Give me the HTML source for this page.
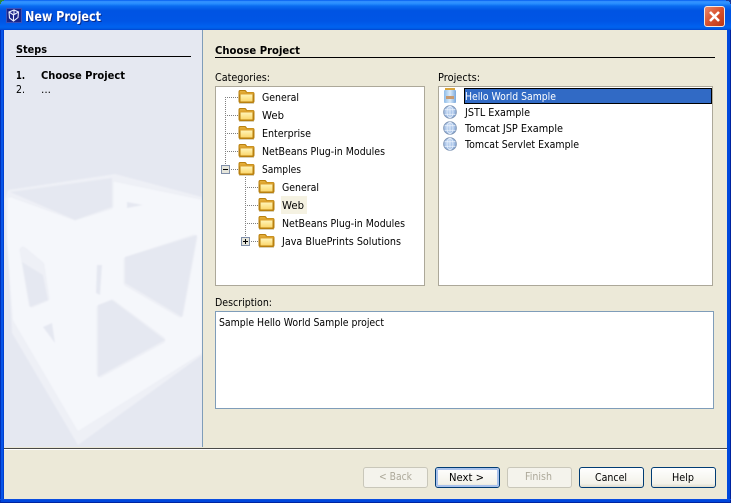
<!DOCTYPE html>
<html><head><meta charset="utf-8"><title>New Project</title>
<style>
html,body{margin:0;padding:0;width:731px;height:503px;overflow:hidden;background:#ece9d8}
svg{display:block}
text{font-family:"DejaVu Sans","Liberation Sans",sans-serif;font-size:11px;fill:#000;white-space:pre}
.b{font-weight:bold}
.d{fill:#aca899}
</style></head><body>
<svg width="731" height="503" viewBox="0 0 731 503" xmlns="http://www.w3.org/2000/svg" shape-rendering="crispEdges">
<defs>
<linearGradient id="tb" x1="0" y1="0" x2="0" y2="1">
<stop offset="0" stop-color="#0058ee"/><stop offset=".05" stop-color="#3593ff"/><stop offset=".12" stop-color="#288eff"/><stop offset=".2" stop-color="#0a6cf0"/><stop offset=".35" stop-color="#0054e3"/><stop offset=".7" stop-color="#0055e5"/><stop offset=".9" stop-color="#0062f0"/><stop offset=".97" stop-color="#0058de"/><stop offset="1" stop-color="#003dd0"/>
</linearGradient>
<linearGradient id="btn" x1="0" y1="0" x2="0" y2="1"><stop offset="0" stop-color="#ffffff"/><stop offset=".8" stop-color="#f3f2ea"/><stop offset="1" stop-color="#dcd8c8"/></linearGradient>
<linearGradient id="cl" x1="0" y1="0" x2="1" y2="1"><stop offset="0" stop-color="#e98a6c"/><stop offset=".5" stop-color="#d9512c"/><stop offset="1" stop-color="#b93414"/></linearGradient>
<linearGradient id="fo" x1="0" y1="0" x2="0" y2="1"><stop offset="0" stop-color="#fff4b8"/><stop offset="1" stop-color="#fbd76c"/></linearGradient>
<radialGradient id="gl" cx=".4" cy=".35" r=".75"><stop offset="0" stop-color="#c4d8f2"/><stop offset=".7" stop-color="#9dbbe4"/><stop offset="1" stop-color="#7a98c4"/></radialGradient>
<linearGradient id="jr" x1="0" y1="0" x2="1" y2="0"><stop offset="0" stop-color="#8fbce8"/><stop offset=".5" stop-color="#dcecfa"/><stop offset="1" stop-color="#7aa8dc"/></linearGradient>
<filter id="soft" x="-5%" y="-5%" width="110%" height="110%"><feGaussianBlur stdDeviation="0.9"/></filter>
<symbol id="folder" width="18" height="15" viewBox="0 0 18 15">
<rect x="1" y="14" width="15" height="1" fill="#d8d0b8"/>
<path d="M0.500 3Q0.500 1 2 1H7Q8 1 9 3H15Q16.500 3 16.500 5V12Q16.500 14 15 14H2Q0.500 14 0.500 12Z" fill="#b9800f" shape-rendering="auto"/>
<path d="M1.500 3.500Q1.500 2 2.500 2H7L8 3.500Z" fill="#e3ad3a" shape-rendering="auto"/>
<rect x="1.500" y="3.500" width="14" height="2" fill="#dca22e" shape-rendering="auto"/>
<rect x="2.500" y="5.500" width="12" height="7" fill="url(#fo)" shape-rendering="auto"/>
</symbol>
<symbol id="globe" width="14" height="14" viewBox="0 0 14 14">
<circle cx="7" cy="7" r="6.300" fill="url(#gl)" stroke="#7c93b4" shape-rendering="auto"/>
<g fill="none" stroke="#e6effb" stroke-width=".8" shape-rendering="auto"><ellipse cx="7" cy="7" rx="3" ry="5.800"/><path d="M1.500 4.700H12.500M1.500 9.300H12.500M7 1.200V12.800"/></g>
</symbol>
</defs>

<!-- window frame -->
<rect width="731" height="503" fill="#0046dc"/>
<rect x="0" y="30" width="1" height="473" fill="#0030b8"/>
<rect x="1" y="30" width="2" height="470" fill="#0855e8"/>
<rect x="3" y="30" width="1" height="470" fill="#0040d0"/>
<rect x="730" y="30" width="1" height="473" fill="#0024a0"/>
<rect x="727" y="30" width="3" height="470" fill="#0048dc"/>
<rect x="0" y="499" width="731" height="1" fill="#0a4ee0"/>
<rect x="0" y="502" width="731" height="1" fill="#0024a0"/>
<rect width="731" height="30" fill="url(#tb)"/>
<path d="M0 0H4V1H2V2H1V4H0Z" fill="#2f8a3a"/>
<path d="M731 0H726V1H729V2H730V4H731Z" fill="#1a3a9a"/>

<!-- title -->
<rect x="6" y="8" width="16" height="15" fill="#1a2488"/>
<rect x="6.500" y="8.500" width="15" height="14" fill="none" stroke="#3a50b8"/>
<g fill="none" stroke="#e8edff" stroke-width="1.100" shape-rendering="auto">
<path d="M9 12L14 10L18.500 12L18 17.500L13.500 21L9.500 18Z"/><path d="M9 12L13.500 15L18.500 12M13.500 15V21M14 10V15"/>
</g>
<text x="26" y="22" class="b" textLength="76" lengthAdjust="spacingAndGlyphs" style="font-size:13px;fill:#0a2a8a">New Project</text>
<text x="25" y="21" class="b" textLength="76" lengthAdjust="spacingAndGlyphs" style="font-size:13px;fill:#fff">New Project</text>

<!-- close -->
<rect x="704.500" y="6.500" width="20" height="20" rx="2.500" fill="url(#cl)" stroke="#f3e8e2" shape-rendering="auto"/>
<path d="M710 12L719 21M719 12L710 21" stroke="#fff" stroke-width="2.600" fill="none" shape-rendering="auto"/>

<!-- content -->
<rect x="4" y="30" width="723" height="469" fill="#ece9d8"/>

<!-- sidebar -->
<rect x="4" y="30" width="198" height="417" fill="#e5e8f1"/>
<svg x="4" y="30" width="198" height="417" viewBox="4 30 198 417">
<g shape-rendering="auto" filter="url(#soft)">
<path d="M8 190L115 174L202 197V355L78 445L12 333L5 200Z" fill="#eef0f6"/>
<path d="M8 198L115 182L202 200V353L78 431L13 320L7 240Z" fill="#f5f7fb"/>
<g fill="#eef0f6" stroke="#eef0f6" stroke-width="7" stroke-linejoin="round">
<path d="M14 195L110 181V206L75 217Z"/>
<path d="M127 260L194 238L180 314L127 283Z"/>
<path d="M100 308L112 303L162 340L100 374Z"/>
<path d="M23 250L41 265L46 298L32 304Z"/>
</g>
<g fill="#e5e8f1">
<path d="M10 192L112 178V207L75 220Z"/>
<path d="M125 257L197 235L182 317L125 283Z"/>
<path d="M98 305L112 300L165 340L98 377Z"/>
<path d="M22 262L43 275L48 300L30 307Z"/>
<path d="M43 327L52 323L55 343Z"/>
<path d="M97 265H102L100 295L96 293Z"/>
<path d="M127 202L143 205L127 208Z"/>
</g>
</g>
</svg>
<rect x="202" y="30" width="1" height="417" fill="#7f9db9"/>
<rect x="4" y="448" width="723" height="1" fill="#4a4a48"/>
<rect x="4" y="449" width="723" height="1" fill="#ffffff"/>

<text x="16" y="53" class="b" textLength="31" lengthAdjust="spacingAndGlyphs">Steps</text>
<rect x="16" y="56" width="175" height="1" fill="#000"/>
<text x="16" y="79" class="b" textLength="9" lengthAdjust="spacingAndGlyphs">1.</text>
<text x="41" y="79" class="b" textLength="84" lengthAdjust="spacingAndGlyphs">Choose Project</text>
<text x="16" y="93" textLength="9" lengthAdjust="spacingAndGlyphs">2.</text>
<text x="41" y="93" textLength="10" lengthAdjust="spacingAndGlyphs">...</text>

<!-- heading -->
<text x="215" y="54" class="b" textLength="85" lengthAdjust="spacingAndGlyphs">Choose Project</text>
<rect x="215" y="57" width="500" height="1" fill="#000"/>

<text x="215" y="81" textLength="55" lengthAdjust="spacingAndGlyphs">Categories:</text>
<text x="438" y="81" textLength="42" lengthAdjust="spacingAndGlyphs">Projects:</text>

<!-- categories box -->
<rect x="215.500" y="86.500" width="209" height="199" fill="#fff" stroke="#aca899"/>
<g stroke="#808080" stroke-dasharray="1 1" fill="none">
<path d="M225.500 97V165M225 97.500H238M225 115.500H238M225 133.500H238M225 151.500H238M229 169.500H238"/>
<path d="M245.500 177V237M245 187.500H258M245 205.500H258M245 223.500H258M249 241.500H258"/>
</g>
<g>
<rect x="221.500" y="165.500" width="8" height="8" fill="#e6e6dc" stroke="#7f8ea8"/>
<rect x="223" y="169" width="5" height="1" fill="#000"/>
<rect x="241.500" y="237.500" width="8" height="8" fill="#e6e6dc" stroke="#7f8ea8"/>
<rect x="243" y="241" width="5" height="1" fill="#000"/>
<rect x="245" y="239" width="1" height="5" fill="#000"/>
</g>
<use href="#folder" x="238" y="89"/>
<use href="#folder" x="238" y="107"/>
<use href="#folder" x="238" y="125"/>
<use href="#folder" x="238" y="143"/>
<use href="#folder" x="238" y="161"/>
<use href="#folder" x="258" y="179"/>
<use href="#folder" x="258" y="197"/>
<use href="#folder" x="258" y="215"/>
<use href="#folder" x="258" y="233"/>
<text x="262" y="101" textLength="37" lengthAdjust="spacingAndGlyphs">General</text>
<text x="262" y="119" textLength="22" lengthAdjust="spacingAndGlyphs">Web</text>
<text x="262" y="137" textLength="49" lengthAdjust="spacingAndGlyphs">Enterprise</text>
<text x="262" y="155" textLength="123" lengthAdjust="spacingAndGlyphs">NetBeans Plug-in Modules</text>
<text x="262" y="173" textLength="39" lengthAdjust="spacingAndGlyphs">Samples</text>
<text x="282" y="191" textLength="37" lengthAdjust="spacingAndGlyphs">General</text>
<rect x="281" y="196" width="26" height="18" fill="#f5f2e2"/>
<text x="282" y="209" textLength="22" lengthAdjust="spacingAndGlyphs">Web</text>
<text x="282" y="227" textLength="123" lengthAdjust="spacingAndGlyphs">NetBeans Plug-in Modules</text>
<text x="282" y="245" textLength="119" lengthAdjust="spacingAndGlyphs">Java BluePrints Solutions</text>

<!-- projects box -->
<rect x="438.500" y="86.500" width="274" height="199" fill="#fff" stroke="#aca899"/>
<rect x="464.500" y="88.500" width="247" height="15" fill="#316ac5" stroke="#000"/>
<g>
<rect x="445" y="88" width="10" height="2" fill="#d9a53a"/>
<rect x="444" y="90" width="12" height="13" rx="1" fill="url(#jr)" shape-rendering="auto"/>
<rect x="446" y="96" width="8" height="3" fill="#c89a70"/>
</g>
<use href="#globe" x="443" y="105"/>
<use href="#globe" x="443" y="121"/>
<use href="#globe" x="443" y="137"/>
<text x="465" y="100" textLength="91" lengthAdjust="spacingAndGlyphs" style="fill:#fff">Hello World Sample</text>
<text x="465" y="116" textLength="65" lengthAdjust="spacingAndGlyphs">JSTL Example</text>
<text x="465" y="132" textLength="98" lengthAdjust="spacingAndGlyphs">Tomcat JSP Example</text>
<text x="465" y="148" textLength="114" lengthAdjust="spacingAndGlyphs">Tomcat Servlet Example</text>

<!-- description -->
<text x="215" y="306" textLength="57" lengthAdjust="spacingAndGlyphs">Description:</text>
<rect x="215.500" y="311.500" width="498" height="97" fill="#fff" stroke="#7f9db9"/>
<text x="219" y="326" textLength="165" lengthAdjust="spacingAndGlyphs">Sample Hello World Sample project</text>

<!-- buttons -->
<g shape-rendering="auto">
<rect x="363.500" y="467.500" width="64" height="20" rx="2.500" fill="#f4f3ec" stroke="#c9c7ba"/>
<rect x="507.500" y="467.500" width="64" height="20" rx="2.500" fill="#f4f3ec" stroke="#c9c7ba"/>
<rect x="435.500" y="467.500" width="64" height="20" rx="2.500" fill="url(#btn)" stroke="#003c74"/>
<rect x="437" y="469" width="61" height="17" rx="1" fill="none" stroke="#a9c2ec" stroke-width="2"/>
<rect x="579.500" y="467.500" width="64" height="20" rx="2.500" fill="url(#btn)" stroke="#003c74"/>
<rect x="651.500" y="467.500" width="64" height="20" rx="2.500" fill="url(#btn)" stroke="#003c74"/>
</g>
<text x="379" y="480" class="d" textLength="33" lengthAdjust="spacingAndGlyphs">&lt; Back</text>
<text x="449" y="481" textLength="35" lengthAdjust="spacingAndGlyphs">Next &gt;</text>
<text x="525" y="480" class="d" textLength="27" lengthAdjust="spacingAndGlyphs">Finish</text>
<text x="595" y="481" textLength="32" lengthAdjust="spacingAndGlyphs">Cancel</text>
<text x="672" y="481" textLength="22" lengthAdjust="spacingAndGlyphs">Help</text>
</svg>
</body></html>
